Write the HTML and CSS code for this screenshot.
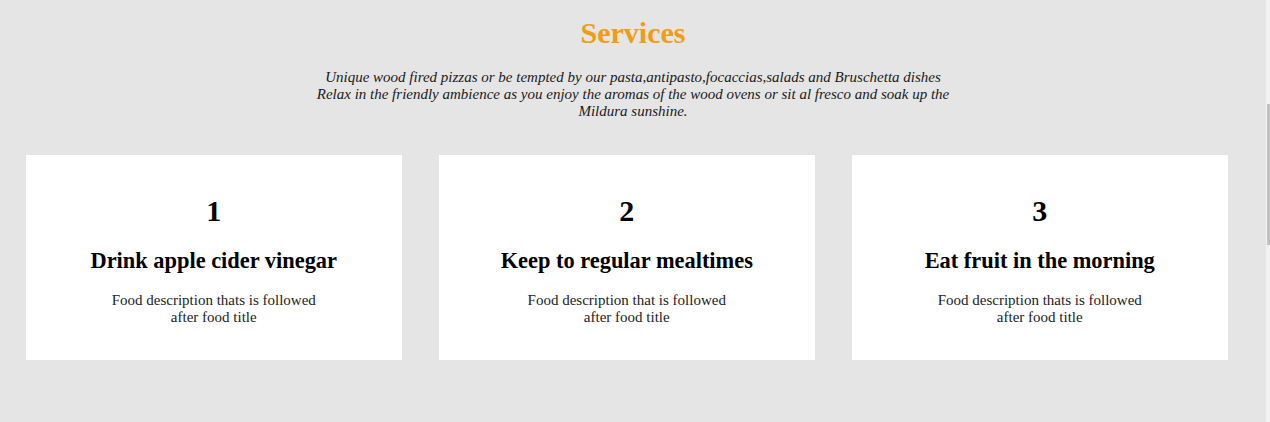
FILE: index.html
```html
<!DOCTYPE html>
<html lang="en">
<head>
<meta charset="utf-8">
<title>Services</title>
<link rel="stylesheet" href="styles.css">
</head>
<body>
<div class="page">
  <section class="services">
    <h2 class="services-title">Services</h2>
    <p class="services-intro">Unique wood fired pizzas or be tempted by our pasta,antipasto,focaccias,salads and Bruschetta dishes Relax in the friendly ambience as you enjoy the aromas of the wood ovens or sit al fresco and soak up the Mildura sunshine.</p>
    <div class="cards">
      <div class="card">
        <div class="card-num">1</div>
        <h3 class="card-title">Drink apple cider vinegar</h3>
        <p class="card-desc">Food description thats is followed after food title</p>
      </div>
      <div class="card">
        <div class="card-num">2</div>
        <h3 class="card-title">Keep to regular mealtimes</h3>
        <p class="card-desc">Food description that is followed after food title</p>
      </div>
      <div class="card">
        <div class="card-num">3</div>
        <h3 class="card-title">Eat fruit in the morning</h3>
        <p class="card-desc">Food description thats is followed after food title</p>
      </div>
    </div>
  </section>
</div>
<div class="scrollbar"><div class="scrollbar-thumb"></div></div>
</body>
</html>
```

FILE: styles.css
```css
html, body {
  margin: 0;
  padding: 0;
  background: #e5e5e5;
  height: 100%;
  overflow: hidden;
}

body {
  font-family: "Liberation Serif", "Times New Roman", serif;
  color: #000;
}

.page {
  margin-right: 4px;
}

.services {
  padding-top: 16px;
  display: flex;
  flex-direction: column;
  align-items: center;
}

.services-title {
  margin: 0;
  font-size: 30px;
  line-height: 34px;
  font-weight: bold;
  color: #f39c12;
}

.services-intro {
  margin: 19px 0 0;
  width: 633px;
  font-size: 15px;
  line-height: 17px;
  font-style: italic;
  text-align: center;
  color: #1a1a1a;
}

.cards {
  align-self: stretch;
  display: flex;
  gap: 37.5px;
  padding-left: 26px;
  margin-top: 35px;
}

.card {
  width: 375.5px;
  background: #fff;
  padding: 39px 0 34px;
  display: flex;
  flex-direction: column;
  align-items: center;
  text-align: center;
}

.card-num {
  font-size: 30px;
  line-height: 34px;
  font-weight: bold;
}

.card-title {
  margin: 20px 0 0;
  font-size: 22.4px;
  line-height: 26px;
  font-weight: bold;
}

.card-desc {
  margin: 18px 0 0;
  width: 220px;
  font-size: 15px;
  line-height: 17px;
  color: #222;
}

.scrollbar {
  position: fixed;
  top: 0;
  right: 0;
  width: 4px;
  height: 100%;
  background: #f1f1f1;
}

.scrollbar-thumb {
  margin-top: 104px;
  margin-left: 1px;
  width: 3px;
  height: 141px;
  background: #c1c1c1;
}
```
